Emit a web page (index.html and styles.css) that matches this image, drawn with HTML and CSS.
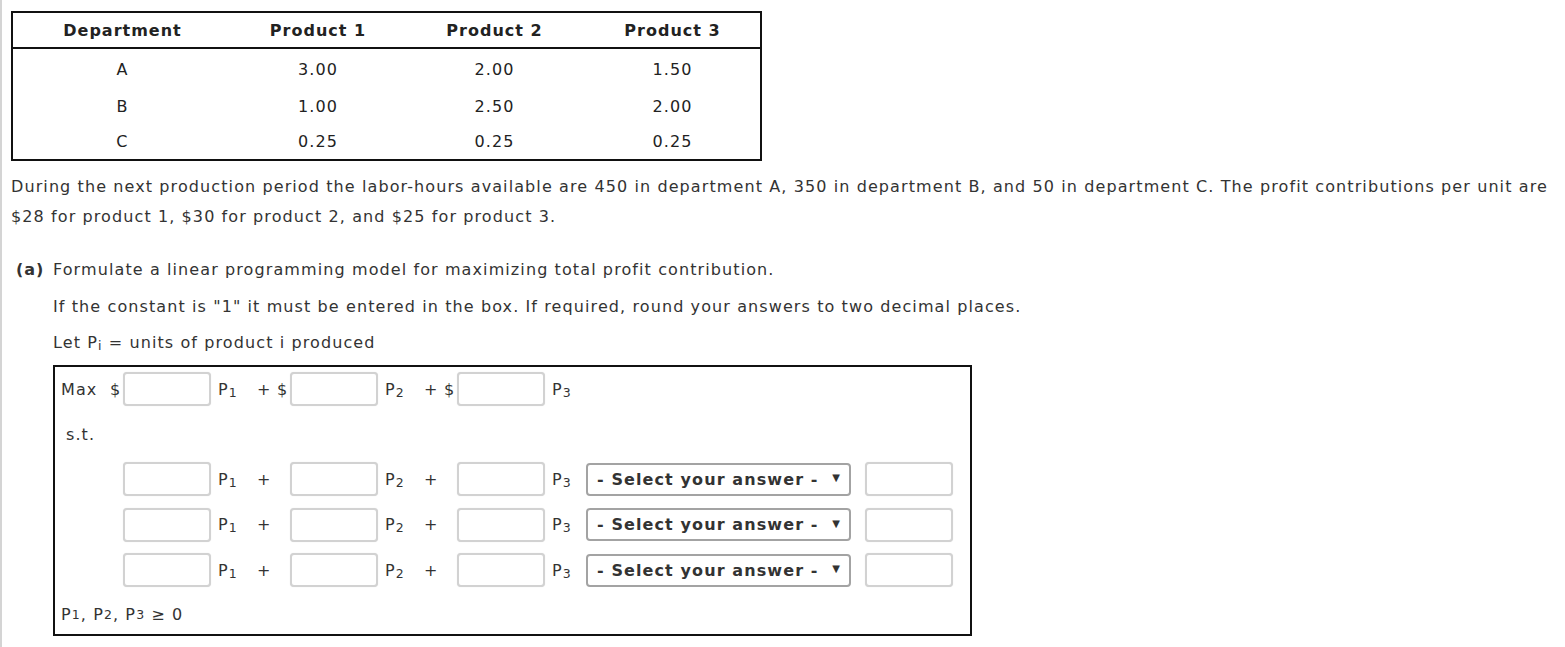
FILE: index.html
```html
<!DOCTYPE html>
<html>
<head>
<meta charset="utf-8">
<link rel="stylesheet" href="styles.css">
</head>
<body>
<div class="page">
  <table class="data">
    <thead>
      <tr><th class="c1">Department</th><th class="c2">Product 1</th><th class="c3">Product 2</th><th class="c4">Product 3</th></tr>
    </thead>
    <tbody>
      <tr class="first"><td>A</td><td>3.00</td><td>2.00</td><td>1.50</td></tr>
      <tr><td>B</td><td>1.00</td><td>2.50</td><td>2.00</td></tr>
      <tr class="last"><td>C</td><td>0.25</td><td>0.25</td><td>0.25</td></tr>
    </tbody>
  </table>

  <p class="intro">During the next production period the labor-hours available are 450 in department A, 350 in department B, and 50 in department C. The profit contributions per unit are $28 for product 1, $30 for product 2, and $25 for product 3.</p>

  <div class="part">
    <div class="part-label">(a)</div>
    <div class="part-body">
      <p class="line">Formulate a linear programming model for maximizing total profit contribution.</p>
      <p class="line">If the constant is "1" it must be entered in the box. If required, round your answers to two decimal places.</p>
      <p class="line">Let P<sub>i</sub> = units of product i produced</p>

      <div class="model">
        <div class="row">
          <span class="lead">Max</span>
          <span class="cur">$</span><span class="box"></span>
          <span class="var">P<sub>1</sub></span><span class="plus">+</span><span class="cur">$</span><span class="box"></span>
          <span class="var">P<sub>2</sub></span><span class="plus">+</span><span class="cur">$</span><span class="box"></span>
          <span class="var v3">P<sub>3</sub></span>
        </div>
        <div class="row st">s.t.</div>
        <div class="row con">
          <span class="lead"></span>
          <span class="cur"></span><span class="box"></span>
          <span class="var">P<sub>1</sub></span><span class="plus">+</span><span class="cur"></span><span class="box"></span>
          <span class="var">P<sub>2</sub></span><span class="plus">+</span><span class="cur"></span><span class="box"></span>
          <span class="var v3">P<sub>3</sub></span>
          <span class="select"><span>- Select your answer -</span><span class="arrow">▼</span></span>
          <span class="box rhs"></span>
        </div>
        <div class="row con">
          <span class="lead"></span>
          <span class="cur"></span><span class="box"></span>
          <span class="var">P<sub>1</sub></span><span class="plus">+</span><span class="cur"></span><span class="box"></span>
          <span class="var">P<sub>2</sub></span><span class="plus">+</span><span class="cur"></span><span class="box"></span>
          <span class="var v3">P<sub>3</sub></span>
          <span class="select"><span>- Select your answer -</span><span class="arrow">▼</span></span>
          <span class="box rhs"></span>
        </div>
        <div class="row con">
          <span class="lead"></span>
          <span class="cur"></span><span class="box"></span>
          <span class="var">P<sub>1</sub></span><span class="plus">+</span><span class="cur"></span><span class="box"></span>
          <span class="var">P<sub>2</sub></span><span class="plus">+</span><span class="cur"></span><span class="box"></span>
          <span class="var v3">P<sub>3</sub></span>
          <span class="select"><span>- Select your answer -</span><span class="arrow">▼</span></span>
          <span class="box rhs"></span>
        </div>
        <div class="row nonneg">P<sub>1</sub>,&nbsp;P<sub>2</sub>,&nbsp;P<sub>3</sub>&nbsp;≥&nbsp;0</div>
      </div>
    </div>
  </div>
</div>
</body>
</html>
```

FILE: styles.css
```css
html, body {
  margin: 0;
  padding: 0;
  background: #fff;
}

body {
  font-family: "DejaVu Sans", Verdana, sans-serif;
  font-size: 16px;
  letter-spacing: 1.1px;
  color: #333;
}

.page {
  border-left: 2px solid #d4d4d4;
  min-height: 647px;
  box-sizing: border-box;
  padding: 11px 0 0 9px;
}

sub {
  font-size: 12.5px;
  vertical-align: -2px;
  line-height: 0;
}

.data {
  border-collapse: collapse;
  border: 2px solid #111;
  width: 747px;
  table-layout: fixed;
}

.data th {
  font-weight: bold;
  color: #222;
  height: 34px;
  border-bottom: 2px solid #111;
  text-align: center;
  padding: 0;
  letter-spacing: 1px;
}

.data td {
  text-align: center;
  color: #222;
  height: 36px;
  padding: 0;
}

.data .first td { height: 40px; padding-top: 2px; box-sizing: border-box; }
.data .last td { height: 35px; }

.data .c1 { width: 219px; }
.data .c2 { width: 172px; }
.data .c3 { width: 181px; }
.data .c4 { width: 175px; }

.intro {
  margin: 11px 0 0 0;
  line-height: 30px;
  padding-right: 4px;
}

.part {
  display: flex;
  margin-top: 23px;
}

.part-label {
  font-weight: bold;
  width: 42px;
  padding-left: 5px;
  box-sizing: border-box;
  line-height: 30px;
  flex: none;
  letter-spacing: 1px;
}

.part-body {
  flex: 1;
}

.line {
  margin: 0 0 6.5px 0;
  line-height: 30px;
}

.model {
  width: 919px;
  box-sizing: border-box;
  border: 2px solid #111;
  margin-top: 0;
  padding: 0 0 0 6px;
}

.row {
  height: 45px;
  display: flex;
  align-items: center;
  white-space: nowrap;
}

.con { height: 45.5px; }

.nonneg { height: 41px; padding-top: 2px; box-sizing: border-box; }

.lead { width: 49px; }
.cur { width: 13px; }
.box {
  width: 88px;
  height: 34px;
  box-sizing: border-box;
  border: 2px solid #d2d2d2;
  border-radius: 4px;
  background: #fff;
  box-shadow: 0 0 1px rgba(0,0,0,0.15);
  flex: none;
}
.var { width: 39px; padding-left: 7px; flex: none; }
.v3 { width: 34px; }
.plus { width: 20px; flex: none; }

.st { padding-left: 5px; }

.select {
  width: 265px;
  height: 33px;
  box-sizing: border-box;
  border: 2px solid #a3a3a3;
  border-radius: 4px;
  display: flex;
  align-items: center;
  justify-content: space-between;
  padding: 0 9px 0 9px;
  font-weight: bold;
  color: #333;
  font-size: 16px;
  letter-spacing: 1.1px;
  flex: none;
}

.arrow {
  font-size: 10px;
  letter-spacing: 0;
  color: #333;
  margin-top: -3px;
}

.rhs { margin-left: 14px; }
```
